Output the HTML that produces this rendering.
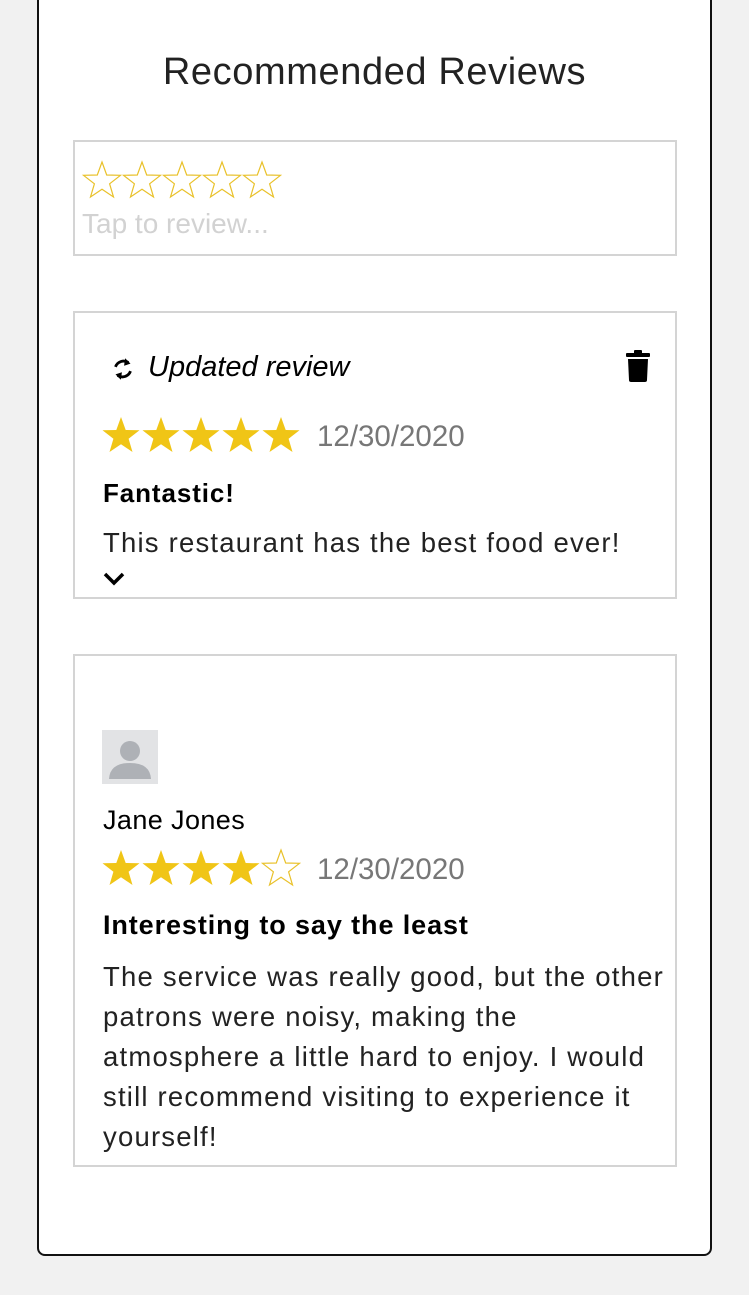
<!DOCTYPE html>
<html><head><style>
body{margin:0;width:749px;height:1295px;background:#f1f1f1;font-family:"Liberation Sans",sans-serif;position:relative;overflow:hidden}
.card{position:absolute;left:37px;top:-4px;width:671px;height:1256px;background:#fff;border:2px solid #111;border-radius:0 0 8px 8px}
.box{position:absolute;left:73px;width:600px;border:2px solid #d4d4d4;background:#fff}
.abs{position:absolute;white-space:nowrap}
.stars{position:absolute;display:flex}
.stars svg{width:40px;height:40px;display:block}
</style></head><body>
<svg width="0" height="0" style="position:absolute"><defs><polygon id="st" points="20,2 24.7,15 38.5,15.3 27.6,23.8 31.5,37 20,29.2 8.5,37 12.4,23.8 1.5,15.3 15.3,15"/></defs></svg>
<div class="card"></div>
<div class="abs" style="left:0;width:749px;text-align:center;top:51px;font-size:38px;font-weight:300;color:#222;letter-spacing:0.6px">Recommended Reviews</div>

<div class="box" style="top:140px;height:112px"></div>
<div class="stars" style="left:82px;top:160px">
<svg viewBox="0 0 40 40"><use href="#st" fill="none" stroke="#e9c12a" stroke-width="1.2"/></svg><svg viewBox="0 0 40 40"><use href="#st" fill="none" stroke="#e9c12a" stroke-width="1.2"/></svg><svg viewBox="0 0 40 40"><use href="#st" fill="none" stroke="#e9c12a" stroke-width="1.2"/></svg><svg viewBox="0 0 40 40"><use href="#st" fill="none" stroke="#e9c12a" stroke-width="1.2"/></svg><svg viewBox="0 0 40 40"><use href="#st" fill="none" stroke="#e9c12a" stroke-width="1.2"/></svg></div>
<div class="abs" style="left:82px;top:208px;font-size:28px;font-weight:300;color:#d2d2d2">Tap to review...</div>

<div class="box" style="top:311px;height:284px"></div>
<svg class="abs" style="left:110px;top:354px" width="26" height="30" viewBox="0 0 24 28"><path d="M17 8 A8 8 0 0 0 5 12" fill="none" stroke="#000" stroke-width="2.6"/><path d="M14 4 L19 9 L13 11Z" fill="#000"/><path d="M7 20 A8 8 0 0 0 19 16" fill="none" stroke="#000" stroke-width="2.6"/><path d="M10 24 L5 19 L11 17Z" fill="#000"/></svg>
<div class="abs" style="left:148px;top:351px;font-size:29px;font-style:italic;color:#000">Updated review</div>
<svg class="abs" style="left:626px;top:350px" width="24" height="32" viewBox="0 0 24 32"><rect x="0" y="3" width="24" height="4" rx="1" fill="#000"/><rect x="8" y="0" width="8" height="4" rx="1" fill="#000"/><path d="M2 9 H22 L21 30 Q21 32 19 32 H5 Q3 32 3 30Z" fill="#000"/></svg>
<div class="stars" style="left:101px;top:415px">
<svg viewBox="0 0 40 40"><use href="#st" fill="#f0c516"/></svg><svg viewBox="0 0 40 40"><use href="#st" fill="#f0c516"/></svg><svg viewBox="0 0 40 40"><use href="#st" fill="#f0c516"/></svg><svg viewBox="0 0 40 40"><use href="#st" fill="#f0c516"/></svg><svg viewBox="0 0 40 40"><use href="#st" fill="#f0c516"/></svg></div>
<div class="abs" style="left:317px;top:420px;font-size:29.5px;color:#777">12/30/2020</div>
<div class="abs" style="left:103px;top:478px;font-size:26px;font-weight:bold;color:#000;letter-spacing:0.9px">Fantastic!</div>
<div class="abs" style="left:103px;top:527px;font-size:27.5px;color:#222;letter-spacing:1.2px">This restaurant has the best food ever!</div>
<svg class="abs" style="left:103px;top:572px" width="22" height="14" viewBox="0 0 22 14"><path d="M2 2 L11 11 L20 2" fill="none" stroke="#000" stroke-width="3.5"/></svg>

<div class="box" style="top:654px;height:509px"></div>
<div class="abs" style="left:102px;top:730px;width:56px;height:54px;background:#e2e3e5;overflow:hidden">
<svg width="56" height="54" viewBox="0 0 56 54"><circle cx="28" cy="21" r="10" fill="#aeb1b6"/><path d="M7 49 Q8 33 28 33 Q48 33 49 49Z" fill="#aeb1b6"/></svg></div>
<div class="abs" style="left:103px;top:805px;font-size:27px;color:#000;letter-spacing:0.4px">Jane Jones</div>
<div class="stars" style="left:101px;top:848px">
<svg viewBox="0 0 40 40"><use href="#st" fill="#f0c516"/></svg><svg viewBox="0 0 40 40"><use href="#st" fill="#f0c516"/></svg><svg viewBox="0 0 40 40"><use href="#st" fill="#f0c516"/></svg><svg viewBox="0 0 40 40"><use href="#st" fill="#f0c516"/></svg><svg viewBox="0 0 40 40"><use href="#st" fill="none" stroke="#e9c12a" stroke-width="1.2"/></svg></div>
<div class="abs" style="left:317px;top:853px;font-size:29.5px;color:#777">12/30/2020</div>
<div class="abs" style="left:103px;top:910px;font-size:27px;font-weight:bold;color:#000;letter-spacing:0.9px">Interesting to say the least</div>
<div class="abs" style="left:103px;top:957px;font-size:27.5px;color:#222;line-height:40px;letter-spacing:1.2px">The service was really good, but the other<br>patrons were noisy, making the<br>atmosphere a little hard to enjoy. I would<br>still recommend visiting to experience it<br>yourself!</div>
</body></html>
